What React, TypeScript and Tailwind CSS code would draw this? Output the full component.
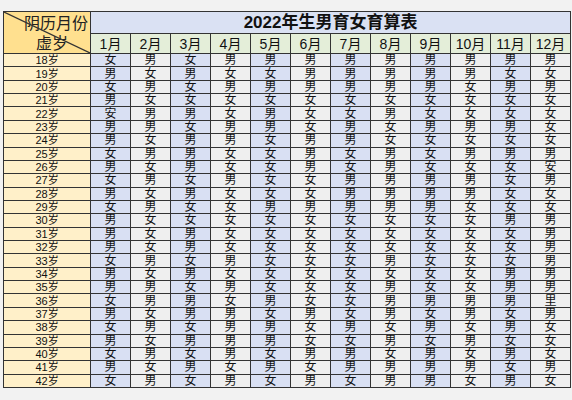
const months = ['1月', '2月', '3月', '4月', '5月', '6月', '7月', '8月', '9月', '10月', '11月', '12月'];

// 18岁 .. 42岁, one string per row, 1月..12月
const rows: string[] = [
  '女男女男男男男男男男男男',
  '男女男女女男男男男男女女',
  '女男女男男男男男男女男男',
  '男女女女女女女女女女女女',
  '安男男女男女女男女女女女',
  '男男女男男女男女男男男女',
  '男女男男女男男女女女女女',
  '女男男女女男女男女男男男',
  '男女男女女男女男女女女安',
  '女男女男女女男男男男女男',
  '男女男女女女男男男男女女',
  '女男女女男男男男男女女女',
  '男女女女女女女女女女男男',
  '男女男女女女女女女女女男',
  '男女男女女女女女女女女男',
  '女男女男女女女男女女女男',
  '男女男女女女女女女女男男',
  '男男女男女女女男女女男男',
  '女男男女男女女男男男男里',
  '男女男男女男女男女男女男',
  '女男女男男女男女男女男女',
  '男女男男男女女男女男女女',
  '女男女男女男男女男女男女',
  '男女男女男女男男男男女男',
  '女男女男女男女男男女男女',
];

const font = { fontFamily: '"Liberation Sans", "Noto Sans CJK SC", sans-serif' };

export default function App() {
  return (
    <div className="w-[572px] h-[400px] bg-[#f2f2f2] pt-[11px] pl-[3px]" style={font}>
      <table className="border-collapse table-fixed w-[567px] text-[#111]">
        <colgroup>
          <col className="w-[87px]" />
          {months.map((m) => (
            <col key={m} className="w-[40px]" />
          ))}
        </colgroup>
        <tbody>
          <tr className="h-[22px]">
            <td rowSpan={2} className="relative p-0 border border-[#333] bg-[#ffe08f]">
              <svg className="absolute inset-0 w-full h-full" viewBox="0 0 100 100" preserveAspectRatio="none">
                <line x1="0" y1="0" x2="100" y2="100" stroke="#333" strokeWidth="1.2" vectorEffect="non-scaling-stroke" />
              </svg>
              <div className="flex flex-col justify-between h-[41px] pt-[2px] px-[2px] text-[16px] leading-[19px] text-[#222]">
                <span className="self-end">阴历月份</span>
                <span className="self-start pl-[30px]">虚岁</span>
              </div>
            </td>
            <td colSpan={12} className="p-0 border border-[#333] bg-[#dae1f3] text-center font-bold text-[17px] leading-[20px]">
              2022年生男育女育算表
            </td>
          </tr>
          <tr className="h-[20px]">
            {months.map((m) => (
              <td key={m} className="p-0 border border-[#333] bg-[#e4eed9] text-center text-[14px] leading-[18px]">
                {m}
              </td>
            ))}
          </tr>
          {rows.map((r, i) => (
            <tr key={i} className="h-[13.36px]">
              <td className="p-0 border border-[#333] bg-[#fff0c9] text-center text-[11px] leading-[12px]">
                {18 + i}岁
              </td>
              {Array.from(r).map((c, j) => (
                <td
                  key={j}
                  className={
                    'p-0 border border-[#333] text-center text-[12px] leading-[12px] ' +
                    (j % 2 === 0 ? 'bg-[#d9e0f3]' : 'bg-[#efefef]')
                  }
                >
                  {c}
                </td>
              ))}
            </tr>
          ))}
        </tbody>
      </table>
    </div>
  );
}
